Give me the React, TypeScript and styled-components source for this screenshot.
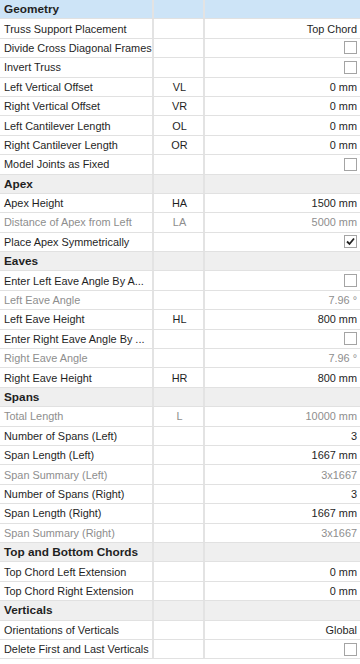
import React, { type FC } from 'react'
import styled, { createGlobalStyle } from 'styled-components'

type Item =
	| { kind: 'group'; title: string; accent?: boolean }
	| {
			kind: 'prop'
			label: string
			symbol?: string
			value?: string
			check?: boolean
			checked?: boolean
			muted?: boolean
	  }

const items: Item[] = [
	{ kind: 'group', title: 'Geometry', accent: true },
	{ kind: 'prop', label: 'Truss Support Placement', value: 'Top Chord' },
	{ kind: 'prop', label: 'Divide Cross Diagonal Frames', check: true },
	{ kind: 'prop', label: 'Invert Truss', check: true },
	{ kind: 'prop', label: 'Left Vertical Offset', symbol: 'VL', value: '0 mm' },
	{ kind: 'prop', label: 'Right Vertical Offset', symbol: 'VR', value: '0 mm' },
	{ kind: 'prop', label: 'Left Cantilever Length', symbol: 'OL', value: '0 mm' },
	{ kind: 'prop', label: 'Right Cantilever Length', symbol: 'OR', value: '0 mm' },
	{ kind: 'prop', label: 'Model Joints as Fixed', check: true },
	{ kind: 'group', title: 'Apex' },
	{ kind: 'prop', label: 'Apex Height', symbol: 'HA', value: '1500 mm' },
	{ kind: 'prop', label: 'Distance of Apex from Left', symbol: 'LA', value: '5000 mm', muted: true },
	{ kind: 'prop', label: 'Place Apex Symmetrically', check: true, checked: true },
	{ kind: 'group', title: 'Eaves' },
	{ kind: 'prop', label: 'Enter Left Eave Angle By A...', check: true },
	{ kind: 'prop', label: 'Left Eave Angle', value: '7.96 °', muted: true },
	{ kind: 'prop', label: 'Left Eave Height', symbol: 'HL', value: '800 mm' },
	{ kind: 'prop', label: 'Enter Right Eave Angle By ...', check: true },
	{ kind: 'prop', label: 'Right Eave Angle', value: '7.96 °', muted: true },
	{ kind: 'prop', label: 'Right Eave Height', symbol: 'HR', value: '800 mm' },
	{ kind: 'group', title: 'Spans' },
	{ kind: 'prop', label: 'Total Length', symbol: 'L', value: '10000 mm', muted: true },
	{ kind: 'prop', label: 'Number of Spans (Left)', value: '3' },
	{ kind: 'prop', label: 'Span Length (Left)', value: '1667 mm' },
	{ kind: 'prop', label: 'Span Summary (Left)', value: '3x1667', muted: true },
	{ kind: 'prop', label: 'Number of Spans (Right)', value: '3' },
	{ kind: 'prop', label: 'Span Length (Right)', value: '1667 mm' },
	{ kind: 'prop', label: 'Span Summary (Right)', value: '3x1667', muted: true },
	{ kind: 'group', title: 'Top and Bottom Chords' },
	{ kind: 'prop', label: 'Top Chord Left Extension', value: '0 mm' },
	{ kind: 'prop', label: 'Top Chord Right Extension', value: '0 mm' },
	{ kind: 'group', title: 'Verticals' },
	{ kind: 'prop', label: 'Orientations of Verticals', value: 'Global' },
	{ kind: 'prop', label: 'Delete First and Last Verticals', check: true },
]

const GlobalStyle = createGlobalStyle`
	html, body {
		margin: 0;
		padding: 0;
		background: #ffffff;
	}
	body {
		font-family: 'Liberation Sans', Arial, sans-serif;
		font-size: 11px;
		color: #1f1f1f;
	}
`

const Grid = styled.div`
	width: 360px;
	display: flex;
	flex-direction: column;
`

const Row = styled.div<{ $bg?: string }>`
	display: grid;
	grid-template-columns: 154px 51px 1fr;
	height: 19.4px;
	box-sizing: border-box;
	border-bottom: 1px solid #e1e1e1;
	background: ${({ $bg }) => $bg ?? '#ffffff'};
`

const Cell = styled.div<{ $align?: 'left' | 'center' | 'right'; $muted?: boolean; $bold?: boolean }>`
	display: flex;
	align-items: center;
	justify-content: ${({ $align }) =>
		$align === 'right' ? 'flex-end' : $align === 'center' ? 'center' : 'flex-start'};
	padding: 0 2px 0 4px;
	border-right: 2px solid #e3e3e3;
	color: ${({ $muted }) => ($muted ? '#8e8e8e' : '#1f1f1f')};
	font-weight: ${({ $bold }) => ($bold ? 700 : 400)};
	font-size: ${({ $bold }) => ($bold ? '11.8px' : '10.9px')};
	white-space: nowrap;
	overflow: hidden;
	min-width: 0;

	&:last-child {
		border-right: none;
		padding-right: 3px;
	}
`

const Box = styled.span`
	width: 11px;
	height: 11px;
	border: 1px solid #a4a4a4;
	background: #ffffff;
	display: flex;
	align-items: center;
	justify-content: center;
`

const CheckBox: FC<{ checked?: boolean }> = ({ checked }) => (
	<Box>
		{checked && (
			<svg width='11' height='11' viewBox='0 0 11 11'>
				<polyline
					points='2,5.5 4.5,8 9,2.5'
					fill='none'
					stroke='#222'
					strokeWidth='1.8'
				/>
			</svg>
		)}
	</Box>
)

export default function App() {
	return (
		<>
			<GlobalStyle />
			<Grid>
				{items.map((it, i) =>
					it.kind === 'group' ? (
						<Row key={i} $bg={it.accent ? '#cde4f7' : '#efefef'}>
							<Cell $bold>{it.title}</Cell>
							<Cell />
							<Cell />
						</Row>
					) : (
						<Row key={i}>
							<Cell $muted={it.muted}>{it.label}</Cell>
							<Cell $align='center' $muted={it.muted}>
								{it.symbol}
							</Cell>
							<Cell $align='right' $muted={it.muted}>
								{it.check ? <CheckBox checked={it.checked} /> : it.value}
							</Cell>
						</Row>
					),
				)}
			</Grid>
		</>
	)
}
